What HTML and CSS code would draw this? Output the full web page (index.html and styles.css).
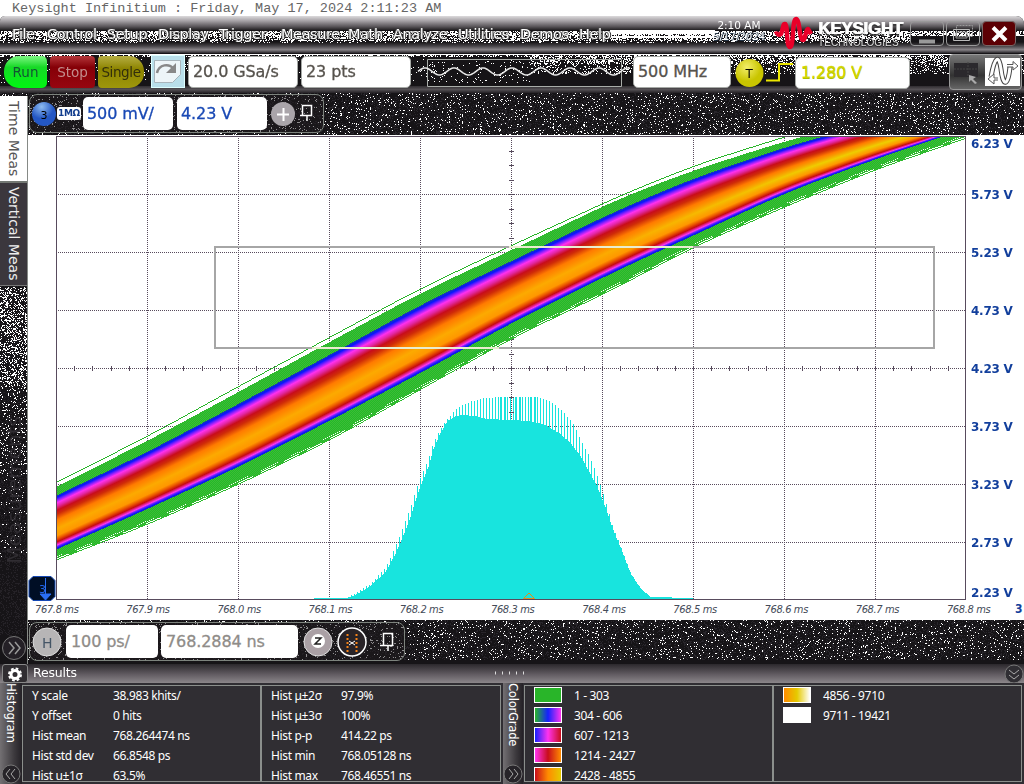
FILE: index.html
```html
<!DOCTYPE html>
<html lang="en">
<head>
<meta charset="utf-8">
<title>Keysight Infiniium</title>
<link rel="stylesheet" href="styles.css">
</head>
<body>
<div class="screen">
  <div class="caption"><span>Keysight Infinitium : Friday, May 17, 2024 2:11:23 AM</span></div>
  <div class="app">
    <canvas class="grain" id="grain" width="1024" height="768"></canvas>
    <header class="titlebar">
      <nav class="menu">
        <span class="m1">File</span><span class="m2">Control</span><span class="m3">Setup</span><span class="m4">Display</span><span class="m5">Trigger</span><span class="m6">Measure</span><span class="m7">Math</span><span class="m8">Analyze</span><span class="m9">Utilities</span><span class="m10">Demos</span><span class="m11">Help</span>
      </nav>
      <div class="clock"><div>2:10 AM</div><div class="date">5/17/2024</div></div>
      <svg class="logo" width="38" height="34" viewBox="0 0 38 34"><path d="M1 18 C4 16 4 21 7 18 C9 14 9 7 11 8 C14 9 12 31 16 31 C20 31 18 3 22 3 C26 3 25 24 29 24 C32 24 31 14 34 13 L37 18" fill="none" stroke="#e90029" stroke-width="4.5" stroke-linejoin="round"/></svg>
      <div class="brand"><b>KEYSIGHT</b><span>TECHNOLOGIES</span></div>
      <div class="winbtn"><svg width="32" height="24"><path d="M8 19.500h16" stroke="#999" stroke-width="4"/></svg></div>
      <div class="winbtn"><svg width="32" height="24"><g fill="none" stroke="#999"><path d="M9.500 3.500h16v11h-16z" stroke-dasharray="2 1"/><path d="M6.500 7.500h16v11h-16z" stroke="#bbb"/><path d="M9 10h11v6h-11z"/></g></svg></div>
      <div class="winbtn close"><svg width="32" height="24"><path d="M10 5.500l13 13M23 5.500L10 18.500" stroke="#fff" stroke-width="4"/></svg></div>
    </header>
    <section class="toolbar">
      <div class="run btn">Run</div><div class="stop btn">Stop</div><div class="single btn">Single</div>
      <div class="redo"><svg width="33" height="32"><path d="M2.500 4.500h26v14l-8 8h-18z" fill="#edf5f8" stroke="#a9b5bb"/><path d="M5 17C7 8 17 7 22 13" fill="none" stroke="#888" stroke-width="2.500"/><path d="M24 7v10h-10z" fill="#888"/></svg></div>
      <div class="box rate">20.0 GSa/s</div>
      <div class="box pts">23 pts</div>
      <svg class="wave" width="216" height="34"><path d="M11.500 3.500h194v27h-194z" fill="none" stroke="#a9ada9"/><path id="sine" fill="none" stroke="#e8e8e8" stroke-width="1.500"/></svg>
      <div class="box bw">500 MHz</div>
      <svg class="trig" width="62" height="36"><defs><radialGradient id="gy" cx=".4" cy=".3"><stop offset="0" stop-color="#f3ee6a"/><stop offset="1" stop-color="#c9c500"/></radialGradient></defs><circle cx="15.500" cy="19" r="14" fill="url(#gy)"/><text x="11.500" y="24" font-size="12">T</text><path d="M32 26.500h13V10h14" fill="none" stroke="#ebe600" stroke-width="2"/></svg>
      <div class="box level">1.280 V</div>
      <div class="tools">
        <svg width="72" height="33"><path d="M4 8h24v14h-24z" fill="#2b292d"/><path d="M18 7v17M4 14h24" stroke="#444" stroke-dasharray="2 1"/><path d="M19 20l7 2-3 2 4 4-2 1-4-4-2 2z" fill="#aaa"/><rect x="35" y="3" width="35" height="28" fill="#fff"/><g fill="none"><path d="M41 22C45 0 49 0 51 14C53 32 58 32 60 12" stroke="#444" stroke-width="5"/><path d="M41 22C45 0 49 0 51 14C53 32 58 32 60 12" stroke="#fff" stroke-width="3"/><path d="M57 9.500h6v-3l5 4.500-5 4v-3h-6M48 23h-4v-4l-6 5 6 5v-4h4" fill="#fff" stroke="#555"/></g></svg>
      </div>
    </section>
    <section class="channelbar">
      <div class="frame chframe">
        <svg width="25" height="26"><defs><radialGradient id="gb" cx=".4" cy=".2"><stop offset="0" stop-color="#8ebbf0"/><stop offset="1" stop-color="#2457c4"/></radialGradient></defs><circle cx="13" cy="13" r="12" fill="url(#gb)"/><text x="9.500" y="17.500" font-size="11">3</text></svg>
        <span class="imp">1MΩ</span>
        <div class="box scale">500 mV/</div>
        <div class="box offset">4.23 V</div>
        <svg class="plus" width="50" height="32"><circle cx="14" cy="16" r="12" fill="#aaa5aa"/><path d="M8 16.500h12M14.500 10v13" stroke="#fff" stroke-width="2"/><path d="M33.500 7.500h9v10h-9zM31 17.500h4M38 18v5" fill="none" stroke="#fff" stroke-width="1.500"/></svg>
      </div>
    </section>
    <main class="middle">
      <aside class="sidetabs">
        <div class="tab active"><span>Time Meas</span></div>
        <div class="tab vert"><span>Vertical Meas</span></div>
        <div class="ghost"><span>Measurements</span></div>
        <svg width="27" height="28"><circle cx="14" cy="13" r="11.500" fill="#242026" stroke="#777"/><path d="M9 7l5 6-5 6M15 7l5 6-5 6" fill="none" stroke="#999" stroke-width="1.500"/></svg>
      </aside>
      <div class="work">
        <div class="plotrow">
          <canvas id="plot" width="938" height="466"></canvas>
          <div class="yaxis" id="yaxis"></div>
          <svg class="marker" width="28" height="25"><path d="M5 .5h18l4 4v16l-4 4h-18l-4-4v-16z" fill="#000e25" stroke="#1548b4"/><text x="11" y="17" font-size="11" fill="#2264e8">3</text><path d="M17.500 2v17M12 18h11l-5.500 6z" fill="#2a6ff5" stroke="#2a6ff5"/></svg>
        </div>
        <div class="xaxis" id="xaxis"></div>
        <div class="timebase">
          <div class="frame tbframe">
            <svg width="34" height="32"><circle cx="17" cy="16" r="14" fill="#b7b5b6" stroke="#ddd"/><text x="12" y="22" font-size="14" fill="#456">H</text></svg>
            <div class="box tscale">100 ps/</div>
            <div class="box tpos">768.2884 ns</div>
            <svg width="102" height="34"><circle cx="17" cy="17" r="14" fill="#aaa0a5" stroke="#ddd"/><circle cx="17" cy="16" r="7" fill="#fff"/><path d="M14 13h6l-6 6h6" fill="none" stroke="#222" stroke-width="1.500"/><circle cx="51" cy="17" r="14" fill="#292327" stroke="#fff" stroke-width="1.500"/><path d="M46.500 9v18M55.500 9v18" stroke="#f68218" stroke-width="2" stroke-dasharray="2 2"/><path d="M48 16l6 4M54 16l-6 4" stroke="#fff"/><path d="M82.500 8.500h9v12h-9zM79 20.500h4M87 21v5" fill="none" stroke="#fff" stroke-width="1.500"/></svg>
          </div>
        </div>
      </div>
    </main>
    <div class="resultbar">
      <div class="gear"><svg width="24" height="18"><circle cx="12" cy="9.500" r="4" fill="none" stroke="#fff" stroke-width="3"/><circle cx="12" cy="9.500" r="6" fill="none" stroke="#fff" stroke-width="2" stroke-dasharray="2.700 2"/></svg></div>
      <span class="rtitle">Results</span>
      <svg class="dots" width="36" height="8"><path d="M1 4h34" stroke="#ddd" stroke-width="3" stroke-dasharray="1 6"/></svg>
      <svg class="collapse" width="20" height="20"><circle cx="10" cy="10" r="9" fill="#302e33" stroke="#777"/><path d="M5 6l5 4 5-4M5 11l5 4 5-4" fill="none" stroke="#aaa"/></svg>
    </div>
    <section class="results">
      <div class="strip"><span>Histogram</span><svg width="20" height="20"><circle cx="10" cy="10" r="9" fill="#272429" stroke="#777"/><path d="M9 5l-4 5 4 5M14 5l-4 5 4 5" fill="none" stroke="#aaa"/></svg></div>
      <div class="panel hist">
        <dl class="c1"><dt>Y scale</dt><dd>38.983 khits/</dd><dt>Y offset</dt><dd>0 hits</dd><dt>Hist mean</dt><dd>768.264474 ns</dd><dt>Hist std dev</dt><dd>66.8548 ps</dd><dt>Hist u±1σ</dt><dd>63.5%</dd></dl>
        <dl class="c2"><dt>Hist μ±2σ</dt><dd>97.9%</dd><dt>Hist μ±3σ</dt><dd>100%</dd><dt>Hist p-p</dt><dd>414.22 ps</dd><dt>Hist min</dt><dd>768.05128 ns</dd><dt>Hist max</dt><dd>768.46551 ns</dd></dl>
      </div>
      <div class="strip grade"><span>ColorGrade</span><svg width="20" height="20"><circle cx="10" cy="10" r="9" fill="#272429" stroke="#777"/><path d="M6 5l4 5-4 5M11 5l4 5-4 5" fill="none" stroke="#aaa"/></svg></div>
      <div class="panel colors">
        <ul class="g1"><li><i class="s1"></i>1 - 303</li><li><i class="s2"></i>304 - 606</li><li><i class="s3"></i>607 - 1213</li><li><i class="s4"></i>1214 - 2427</li><li><i class="s5"></i>2428 - 4855</li></ul>
        <ul class="g2"><li><i class="s6"></i>4856 - 9710</li><li><i class="s7"></i>9711 - 19421</li></ul>
      </div>
    </section>
  </div>
</div>
<script src="scope.js"></script>
</body>
</html>
```
FILE: styles.css
```css
* { box-sizing: border-box; }
body { margin: 0; background: #fff; font-family: "DejaVu Sans", sans-serif; }
svg { display: block; flex: none; overflow: visible; }
.screen { width: 1024px; height: 784px; overflow: hidden; display: flex; flex-direction: column; }
.caption { height: 16px; flex: none; padding-left: 12px; font: 13.5px/18px "Liberation Mono", monospace; color: #666; white-space: nowrap; }
.app { position: relative; height: 768px; display: flex; flex-direction: column; background: #161417; border-radius: 5px 8px 0 0; overflow: hidden; }
.grain { position: absolute; left: 0; top: 0; }
.titlebar, .toolbar, .channelbar, .middle, .resultbar, .results { position: relative; flex: none; display: flex; }
.titlebar { height: 37px; }
.menu { width: 706px; display: flex; align-items: flex-start; padding: 9px 0 0 12px; font-size: 14.5px; line-height: 19px; color: #fff; text-shadow: 1px 0 #333, -1px 0 #555, 0 1px #222; }
.menu span { flex: none; white-space: nowrap; letter-spacing: -.4px; }
.m1 { width: 35px; } .m2 { width: 60px; } .m3 { width: 51px; } .m4 { width: 61px; } .m5 { width: 62px; } .m6 { width: 67px; } .m7 { width: 45px; } .m8 { width: 65px; } .m9 { width: 62px; } .m10 { width: 59px; }
.clock { width: 66px; padding-top: 4px; font-size: 10.5px; line-height: 11px; color: #fff; text-align: center; }
.date { text-shadow: 1px 0 #234, 0 1px #234; letter-spacing: -.2px; }
.logo { margin: 0 3px 0 2px; }
.brand { width: 95px; padding: 4px 0 0 3px; font-family: "Liberation Sans", sans-serif; color: #fff; display: flex; flex-direction: column; }
.brand b { font-size: 17px; line-height: 17px; letter-spacing: -.3px; text-shadow: 1px 0 #fff, 0 2px 1px #333; }
.brand span { font-size: 10px; line-height: 11px; letter-spacing: .1px; color: #ddd; text-shadow: 0 1px #222; }
.winbtn { width: 34px; height: 25px; margin: 5px 2px 0 0; border: 1px solid #999; border-radius: 4px; }
.close { background: #5c0004; border-color: #766; }
.toolbar { height: 39px; padding-left: 4px; }
.btn { height: 32px; margin: 3px 3px 0 0; font-size: 13.5px; line-height: 32px; text-align: center; }
.run { width: 43px; border-radius: 15px 5px 5px 15px; background: linear-gradient(#7df783, #16d926 35%, #00f712); color: #153; }
.stop { width: 45px; border-radius: 4px; background: linear-gradient(#b4373b, #850007 35%, #970610); color: #c38c8c; }
.single { width: 46px; border-radius: 4px 15px 15px 4px; background: linear-gradient(#b6ae43, #8d8400 40%, #9e970c); color: #332f0c; letter-spacing: -.4px; }
.redo { width: 34px; height: 33px; margin: 2px 4px 0 4px; background: #b9dfea; border: 1px solid #dff; }
.box { flex: none; background: #fff; border: 1px solid #a6a9a6; border-radius: 5px; height: 32px; line-height: 30px; white-space: nowrap; font-size: 16px; padding-left: 4px; color: #56524c; letter-spacing: -.1px; -webkit-text-stroke: .3px; }
.toolbar .box { margin-top: 3px; }
.toolbar .rate { width: 110px; margin-right: 3px; margin-left: -1px; } .pts { width: 110px; margin-right: 5px; }
.wave { margin: 3px 1px 0 0; }
.bw { width: 98px; margin-right: 3px; }
.trig { margin-top: 1px; color: #333; }
.toolbar .level { width: 115px; margin: 4px 39px 0 -1px; color: #d3d600; text-shadow: 0 1px #9fb700; padding-left: 5px; }
.tools { width: 73px; height: 36px; margin-top: 1px; border: 1px solid #999; border-radius: 4px; background: linear-gradient(#777, #333 60%, #666); }
.channelbar { height: 43px; padding: 2px 0 0 29px; }
.frame { height: 39px; border: 1px solid #7d837d; border-radius: 8px; display: flex; align-items: center; }
.chframe { width: 295px; padding-left: 1px; background: #1d1a1e80; }
.imp { width: 24px; height: 13px; margin: 0 2px 0 1px; background: #fff; border-radius: 3px; font-size: 9px; font-weight: bold; line-height: 13px; text-align: center; color: #123d8e; letter-spacing: -.3px; }
.scale, .offset { color: #1949b5; border: 0; width: 90px; margin-right: 4px; height: 33px; line-height: 33px; }
.plus { margin-left: -2px; }
.middle { height: 529px; }
.sidetabs { width: 28px; margin-top: -39px; height: 568px; display: flex; flex-direction: column; border-right: 1px solid #868a86; }
.tab span, .strip span, .ghost span { writing-mode: vertical-rl; white-space: nowrap; }
.tab { padding-left: 6px; font-size: 14px; }
.tab span { line-height: 16px; }
.active { height: 87px; background: #fff; color: #555; padding-top: 5px; border-bottom: 2px solid #737873; }
.vert { height: 103px; background: #3b373d; color: #eee; padding-top: 4px; border-bottom: 1px solid #777; }
.ghost { height: 349px; padding: 130px 0 0 2px; font-size: 20px; color: #302d32; }
.ghost span { transform: rotate(180deg); }
.work { width: 996px; display: flex; flex-direction: column; }
.plotrow { position: relative; height: 466px; background: #fff; display: flex; }
.marker { position: absolute; left: 0; top: 441px; }
.yaxis { width: 58px; padding: 2px 0 0 5px; font-size: 12px; font-weight: bold; color: #123f9c; display: flex; flex-direction: column; }
.yaxis span { flex: none; height: 58px; line-height: 14px; white-space: nowrap; letter-spacing: -.25px; }
.yaxis span:first-child { height: 51px; }
.yaxis span:nth-child(8) { height: 50px; }
.yaxis span:last-child { height: 14px; }
.xaxis { height: 19px; background: #fff; display: flex; font-family: "DejaVu Sans Condensed", "DejaVu Sans", sans-serif; font-style: italic; font-size: 11px; line-height: 18px; color: #444b58; letter-spacing: -.35px; }
.xaxis span { width: 91.2px; padding-left: 7px; flex: none; white-space: nowrap; }
.xaxis span:last-child { width: 12px; margin-left: 67px; padding: 0; font-weight: bold; font-style: normal; color: #123f9c; font-size: 12px; line-height: 16px; }
.xaxis span:nth-child(11) { width: 8px; }
.timebase { padding: 2px 0 0 1px; height: 44px; }
.tbframe { width: 376px; height: 39px; background: #1d1a1e80; }
.tbframe .box { border: 0; height: 33px; line-height: 33px; color: #8f8c88; letter-spacing: -.1px; padding-left: 5px; }
.tscale { width: 92px; margin: 0 3px 0 2px; } .tpos { width: 137px; margin-right: 3px; }
.resultbar { height: 19px; background: linear-gradient(#2b282c, #625c62 55%, #8b868a); color: #fff; align-items: center; }
.gear { width: 26px; height: 19px; margin-left: 2px; border: 1px solid #888; border-radius: 3px; background: #302d31; }
.rtitle { width: 462px; padding-left: 5px; font-size: 12.5px; line-height: 17px; height: 19px; letter-spacing: -.2px; }
.dots { margin: -2px 0 0 4px; } .collapse { margin-left: 474px; }
.results { height: 101px; background: #302e33; font: 12px/20px "Noto Sans", sans-serif; color: #fff; letter-spacing: -.35px; }
.strip { width: 22px; background: linear-gradient(90deg, #737073, #3c393d 65%, #242126); display: flex; flex-direction: column; justify-content: space-between; align-items: center; }
.strip span { font: 13px/16px "DejaVu Sans Condensed", "DejaVu Sans", sans-serif; letter-spacing: -.1px; }
.panel { display: flex; height: 97px; margin-top: 2px; border: 1px solid #8b8f8c; }
.hist { width: 479px; margin-right: 2px; }
.colors { width: 498px; margin-left: 1px; }
dl, ul { margin: 0; overflow: hidden; height: 95px; }
dl { display: grid; grid-auto-rows: 20px; align-content: start; white-space: nowrap; }
dd { margin: 0; }
.c1 { width: 239px; grid-template-columns: 81px 1fr; padding-left: 9px; border-right: 2px solid #8b8f8c; }
.c2 { width: 238px; grid-template-columns: 70px 1fr; padding-left: 9px; }
.grade { width: 20px; }
.grade span { letter-spacing: -.3px; }
ul { padding: 0 0 0 9px; list-style: none; }
li { height: 20px; display: flex; align-items: center; }
li i { width: 28px; height: 16px; margin: -2px 12px 0 0; border: 1px solid #fff; }
.g1 { width: 249px; border-right: 2px solid #8b8f8c; }
.s1 { background: #29b529; }
.s2 { background: linear-gradient(90deg, #29b529, #1520ff 50%, #ff33ee); }
.s3 { background: linear-gradient(90deg, #1720ff, #ff33ee 50%, #c80d1b); }
.s4 { background: linear-gradient(90deg, #ff33ee, #c80d1b 50%, #ff8b00); }
.s5 { background: linear-gradient(90deg, #c80d1b, #ff8b00 50%, #e5ca00); }
.s6 { background: linear-gradient(90deg, #ff8b00, #e5ca00 50%, #fff); }
.s7 { background: #fff; }
```
FILE: scope.js
```js
// Small repeatable generator so that the grain is stable between loads.
let seed = 7;
function rnd() { seed = (seed + 0x6D2B79F5) >>> 0; let t = seed; t = Math.imul(t ^ t >>> 15, t | 1); t ^= t + Math.imul(t ^ t >>> 7, t | 61); return ((t ^ t >>> 14) >>> 0) / 4294967296; }

// Background texture of the instrument frame.
const g = document.getElementById('grain').getContext('2d');
function gradient(y, h, stops) {
  const l = g.createLinearGradient(0, y, 0, y + h);
  stops.forEach(s => l.addColorStop(s[0], s[1]));
  g.fillStyle = l; g.fillRect(0, y, 1024, h);
}
function specks(x, y, w, h, p, color) {
  g.fillStyle = color || '#fff';
  for (let j = y; j < y + h; j++) for (let i = x; i < x + w; i++) if (rnd() < p) g.fillRect(i, j, 1, 1);
}
gradient(0, 14, [[0, '#dcdadc'], [.35, '#a5a1a5'], [.75, '#5a565a'], [1, '#232123']]);
gradient(26, 11, [[0, '#161416'], [.35, '#444145'], [.7, '#898589'], [1, '#2a272b']]);
gradient(70, 7, [[0, '#302d31'], [.5, '#555155'], [1, '#242125']]);
specks(0, 77, 1024, 43, .25, '#28252b'); specks(28, 604, 996, 40, .25, '#28252b'); specks(0, 270, 27, 350, .25, '#252227');
specks(0, 15, 1024, 5, .65);
specks(0, 20, 910, 5, .5);
specks(0, 25, 910, 2, .15);
g.fillStyle = '#fff';
g.fillRect(610, 14, 105, 4); g.fillRect(610, 20, 105, 2); g.fillRect(0, 38, 1024, 1);
specks(0, 39, 1024, 2, .35);
specks(530, 40, 494, 8, .4); specks(530, 48, 494, 10, .18); specks(0, 43, 530, 24, .05);
specks(0, 77, 1024, 43, .075);
specks(28, 604, 996, 40, .07);
specks(0, 271, 27, 100, .3); specks(0, 371, 27, 90, .12); specks(0, 461, 27, 80, .04);

// Bandwidth limit preview.
let d = '';
for (let x = 2; x <= 214; x++) d += (d ? ' L' : 'M') + x + ' ' + (15.5 - 3.5 * Math.cos((x - 38) * 2 * Math.PI / 29)).toFixed(2);
document.getElementById('sine').setAttribute('d', d);

// Axis labels.
document.getElementById('yaxis').innerHTML = ['6.23', '5.73', '5.23', '4.73', '4.23', '3.73', '3.23', '2.73', '2.23'].map(v => '<span>' + v + ' V</span>').join('');
const times = [];
for (let i = 0; i < 11; i++) times.push('<span>' + (767.8 + i / 10).toFixed(1) + ' ms</span>');
document.getElementById('xaxis').innerHTML = times.join('') + '<span>3</span>';

// Graticule, in screen coordinates.
const c = document.getElementById('plot').getContext('2d');
c.translate(-28, -135);
c.fillStyle = '#fff'; c.fillRect(28, 135, 938, 466);
c.fillStyle = '#584b5d';
for (let i = 1; i < 10; i++) { const x = Math.round(56 + i * 91); for (let y = 138; y < 599; y += 2) c.fillRect(x, y, 1, 1); }
for (let y = 194; y < 599; y += 58) for (let x = 58; x < 965; x += 2) c.fillRect(x, y, 1, 1);
for (let x = 56; x < 965; x += 18.2) c.fillRect(Math.round(x), 366, 1, 5);
for (let y = 136; y < 599; y += 14.5) c.fillRect(509, Math.round(y), 5, 1);

function lerp(points, x, k) {
  let i = 0;
  while (i < points.length - 2 && points[i + 1][0] < x) i++;
  const a = points[i], b = points[i + 1], t = Math.max(0, Math.min(1, (x - a[0]) / (b[0] - a[0])));
  return a[k] + (b[k] - a[k]) * t;
}
// Averages nearby values to round the corners between knots.
function smooth(points, x, k) {
  let sum = 0;
  for (let o = -30; o <= 30; o += 5) {
    const q = x + o, lo = points[0], hi = points[points.length - 1];
    if (q < lo[0]) sum += lo[k] + (lo[0] - q) * (lo[k] - points[1][k]) / (points[1][0] - lo[0]);
    else if (q > hi[0]) { const p = points[points.length - 2]; sum += hi[k] + (q - hi[0]) * (hi[k] - p[k]) / (hi[0] - p[0]); }
    else sum += lerp(points, q, k);
  }
  return sum / 13;
}

// Persistence band: x, stray trace, green edge, blue edge, blue edge, green edge.
const band = [[57,481,486,495,549,560],[147,436,441,452,509,525],[238,386,392,404,467,485],[329,337,342,355,421,441],[420,288,293,305,373,390],[511,245,250,261,323,339],[620,195,198,209,269,286],[694,165,170,178,235,247],[785,136,141,147,193,207],[875,112,118,122,159,170],[965,95,100,104,129,139]];
c.save();
c.beginPath(); c.rect(57, 137, 908, 462); c.clip();
for (let x = 57; x < 965; x++) {
  const v = [1, 2, 3, 4, 5].map(k => smooth(band, x, k));
  c.fillStyle = '#29b529'; c.fillRect(x, Math.round(v[0]), 1, 1);
  const top = Math.round(v[1]), end = Math.round(v[4]);
  for (let y = top; y < end; y++) { c.fillStyle = (x + y) % 2 ? '#24ba27' : '#3dbb38'; c.fillRect(x, y, 1, 1); }
  const s = c.createLinearGradient(0, v[2], 0, v[3]);
  const warm = Math.max(0, Math.min(1, (x - 600) / 220));
  const core = 'rgb(' + Math.round(252 - 14 * warm) + ',' + Math.round(170 + 35 * warm) + ',0)';
  [[0,'#1739b0'],[.04,'#0815ff'],[.09,'#8a20ff'],[.14,'#ff30ee'],[.2,'#e327a4'],[.28,'#c80d1b'],[.35,'#cf2c08'],[.46,'#ff7b00'],[.62,core],[.75,'#ff9700'],[.81,'#e95200'],[.865,'#c70b10'],[.9,'#e52298'],[.925,'#ff35f0'],[.95,'#6a22ff'],[.98,'#0915ff'],[1,'#1739b0']].forEach(q => s.addColorStop(q[0], q[1]));
  c.fillStyle = s; c.fillRect(x, Math.round(v[2]), 1, Math.round(v[3]) - Math.round(v[2]));
  c.fillStyle = '#fff';
  if (x % 23 > 7) c.fillRect(x, end - 2, 1, 1);
  if (x % 31 > 11 && x % 2) c.fillRect(x, end - 4, 1, 1);
}
c.restore();

// Hit histogram: solid inner envelope with alternating taller bins.
const inner = [[320,598],[346,598],[355,595],[370,586],[385,572],[395,554],[402,538],[410,517],[415,501],[420,486],[428,467],[433,449],[440,433],[447,421],[455,416],[463,415],[475,416],[487,419],[510,420],[530,421],[545,425],[560,434],[570,443],[580,456],[590,474],[597,487],[605,507],[612,528],[620,547],[630,573],[640,588],[650,597],[693,598]];
const outer = [[320,598],[346,598],[355,593],[370,584],[385,568],[395,547],[402,529],[410,508],[415,492],[420,478],[428,459],[433,443],[440,429],[447,419],[453,412],[460,406],[472,401],[485,398],[500,397],[538,397],[550,401],[562,411],[573,424],[580,439],[590,458],[597,476],[605,500],[612,525],[620,545],[630,572],[640,588],[650,597],[693,598]];
for (let x = 314; x < 693; x++) {
  const tall = x % 3 === 0 || (x > 492 && x < 536 && x % 5 === 0);
  const y = Math.round(lerp(tall ? outer : inner, x, 1));
  c.fillStyle = '#18e4de'; c.fillRect(x, y, 1, 599 - y);
}
c.fillStyle = '#584b5d';
c.fillRect(509, 397, 5, 1); c.fillRect(509, 412, 5, 1);
for (let y = 398; y < 420; y += 2) c.fillRect(511, y, 1, 1);
c.fillRect(56, 136, 1, 464); c.fillRect(56, 599, 910, 1); c.fillRect(965, 136, 1, 464); c.fillRect(56, 136, 910, 1);
c.strokeStyle = '#e58b18'; c.beginPath(); c.moveTo(523.5, 598.5); c.lineTo(529, 593); c.lineTo(534.5, 598.5); c.closePath(); c.stroke();

// Measurement window; the border turns pale over the trace.
c.strokeStyle = '#a6a6a6'; c.lineWidth = 2; c.strokeRect(215, 247, 719, 101);
c.fillStyle = '#e9edcf'; c.fillRect(509, 246, 184, 2); c.fillRect(312, 347, 187, 2);
```
